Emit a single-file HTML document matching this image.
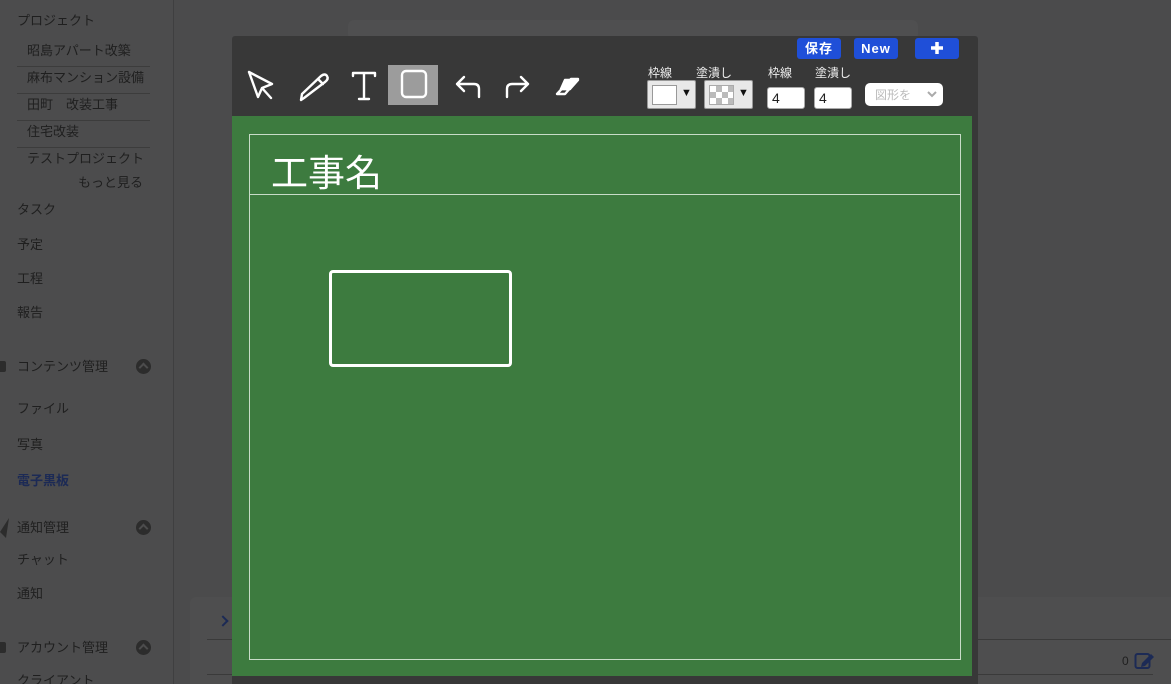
<!DOCTYPE html>
<html><head><meta charset="utf-8"><style>
*{margin:0;padding:0;box-sizing:border-box}
html,body{width:1171px;height:684px;overflow:hidden}
body{background:#4b4b4c;font-family:"Liberation Sans","Noto Sans CJK JP",sans-serif;position:relative;color:#222}
.side{position:absolute;left:0;top:0;width:174px;height:684px;background:#4c4c4d;border-right:1px solid #3f3f40}
.t{position:absolute;font-size:13px;color:#1f1f1f;white-space:nowrap}
.sub{position:absolute;left:17px;width:133px;border-bottom:1px solid #3c3c3c;height:27px}
.chev{position:absolute;left:136px;width:15px;height:15px;border-radius:50%;background:#2c2c2c}
.chev:after{content:"";position:absolute;left:4px;top:5px;width:5px;height:5px;border-left:2px solid #4c4c4d;border-top:2px solid #4c4c4d;transform:rotate(45deg)}
.modal{position:absolute;left:232px;top:36px;width:746px;height:648px;background:#383838;border-radius:3px 3px 0 0}
.btn{position:absolute;top:2px;height:21px;background:#1f4fd8;color:#fff;font-weight:bold;font-size:13px;border-radius:3px;text-align:center;line-height:21px;letter-spacing:1px}
.lbl{position:absolute;top:28px;font-size:12px;color:#eee}
.sel{position:absolute;top:44px;width:49px;height:29px;background:#e8e8e8;border:1px solid #999;border-radius:2px}
.inp{position:absolute;top:51px;width:38px;height:22px;background:#fff;border:1px solid #aaa;border-radius:3px;font-size:14px;padding-left:4px;line-height:20px;color:#222}
.green{position:absolute;left:0;top:80px;width:740px;height:560px;background:#3d7b3f}
</style></head><body>
<div class="side">
<div class="t" style="left:17px;top:10px">プロジェクト</div>
<div class="sub" style="top:40px"><div class="t" style="left:10px;top:0px">昭島アパート改築</div></div>
<div class="sub" style="top:67px"><div class="t" style="left:10px;top:0px">麻布マンション設備</div></div>
<div class="sub" style="top:94px"><div class="t" style="left:10px;top:0px">田町　改装工事</div></div>
<div class="sub" style="top:121px"><div class="t" style="left:10px;top:0px">住宅改装</div></div>
<div class="t" style="left:27px;top:148px">テストプロジェクト</div>
<div class="t" style="left:78px;top:172px">もっと見る</div>
<div class="t" style="left:17px;top:199px">タスク</div>
<div class="t" style="left:17px;top:234px">予定</div>
<div class="t" style="left:17px;top:268px">工程</div>
<div class="t" style="left:17px;top:302px">報告</div>
<div style="position:absolute;left:-4px;top:361px;width:10px;height:11px;background:#2c2c2c;border-radius:2px"></div>
<div class="t" style="left:17px;top:356px">コンテンツ管理</div><div class="chev" style="top:359px"></div>
<div class="t" style="left:17px;top:398px">ファイル</div>
<div class="t" style="left:17px;top:434px">写真</div>
<div class="t" style="left:17px;top:470px;color:#1c2a55;font-weight:bold">電子黒板</div>
<svg style="position:absolute;left:0;top:518px" width="10" height="20"><path d="M0 14 L9 0 L6 20 Z" fill="#2c2c2c"/></svg>
<div class="t" style="left:17px;top:517px">通知管理</div><div class="chev" style="top:520px"></div>
<div class="t" style="left:17px;top:549px">チャット</div>
<div class="t" style="left:17px;top:583px">通知</div>
<div style="position:absolute;left:-4px;top:642px;width:10px;height:11px;background:#2c2c2c;border-radius:2px"></div>
<div class="t" style="left:17px;top:637px">アカウント管理</div><div class="chev" style="top:640px"></div>
<div class="t" style="left:17px;top:670px">クライアント</div>
</div>
<div style="position:absolute;left:348px;top:20px;width:570px;height:20px;background:#4f4f50;border-radius:6px"></div>
<div style="position:absolute;left:190px;top:597px;width:981px;height:87px;background:#4e4e4f;border-radius:6px 0 0 0"></div>
<div style="position:absolute;left:207px;top:639px;width:964px;border-top:1px solid #3a3a3a"></div>
<div style="position:absolute;left:207px;top:674px;width:946px;border-top:1px solid #3a3a3a"></div>
<div style="position:absolute;left:219px;top:617px;width:8px;height:8px;border-right:2px solid #1c2a55;border-top:2px solid #1c2a55;transform:rotate(45deg)"></div>
<div class="t" style="left:1122px;top:654px;font-size:12px">0</div>
<svg style="position:absolute;left:1134px;top:651px" width="22" height="20" viewBox="0 0 22 20"><rect x="1.5" y="3" width="14" height="14" rx="2" fill="none" stroke="#1c2a55" stroke-width="2"/><path d="M8 12 L17 3 L20 6 L11 15 L7 16Z" fill="#1c2a55"/></svg>
<div class="modal">
<div class="btn" style="left:565px;width:44px">保存</div>
<div class="btn" style="left:622px;width:44px">New</div>
<div class="btn" style="left:683px;width:44px"><svg width="14" height="14" style="margin-top:3px" viewBox="0 0 14 14"><path d="M7 1V13M1 7H13" stroke="#fff" stroke-width="3.5"/></svg></div>
<div style="position:absolute;left:156px;top:29px;width:50px;height:40px;background:#9c9c9c"></div>
<svg style="position:absolute;left:0;top:0" width="400" height="80" fill="none" stroke="#fff" stroke-width="2.4" stroke-linecap="round" stroke-linejoin="round">
<path d="M17 36 L40 48 L30 52 L39 62 M17 36 L26 61 L30 52"/>
<path d="M72 62 L69 64 L70 58 L89 40 Q93 37 95 40 Q97 43 93 46 Z M86 43 L91 48"/>
<path d="M121 40 V37 H143 V40 M132 37 V63 M127 63 H137"/>
<rect x="170" y="35" width="24" height="26" rx="4"/>
<path d="M247 61 V53 Q247 48 242 48 H225 M232 41 L225 48 L232 55"/>
<path d="M275 61 V53 Q275 48 280 48 H296 M289 41 L296 48 L289 55"/>
<path d="M325 58 L339 43 H346 L333 58 Z M329 53 H338"/>
<path d="M333 44 L346 44 L338 53 L329 53 Z" fill="#fff"/>
</svg>
<div class="lbl" style="left:416px">枠線</div><div class="lbl" style="left:464px">塗潰し</div>
<div class="lbl" style="left:536px">枠線</div><div class="lbl" style="left:583px">塗潰し</div>
<div class="sel" style="left:415px"><div style="position:absolute;left:4px;top:4px;width:25px;height:20px;background:#fff;border:1px solid #999"></div><div style="position:absolute;left:33px;top:6px;font-size:11px;color:#111">▼</div></div>
<div class="sel" style="left:472px"><div style="position:absolute;left:4px;top:4px;width:25px;height:20px;background:repeating-conic-gradient(#bbb 0 25%,#fff 0 50%) 0 0/12px 12px;border:1px solid #aaa"></div><div style="position:absolute;left:33px;top:6px;font-size:11px;color:#111">▼</div></div>
<div class="inp" style="left:535px">4</div>
<div class="inp" style="left:582px">4</div>
<div style="position:absolute;left:633px;top:47px;width:78px;height:23px;background:#fff;border-radius:5px;font-size:12px;color:#bbb;padding:3px 0 0 10px">図形を<svg style="position:absolute;right:6px;top:8px" width="10" height="7"><path d="M1 1 L5 5 L9 1" stroke="#aaa" stroke-width="2" fill="none"/></svg></div>
<div class="green">
<div style="position:absolute;left:17px;top:18px;width:712px;height:526px;border:1px solid #c8dcc8"></div>
<div style="position:absolute;left:17px;top:78px;width:712px;border-top:1px solid #c8dcc8"></div>
<div style="position:absolute;left:39px;top:27px;font-size:37px;color:#fff;font-family:'Noto Sans CJK JP',sans-serif;font-weight:400">工事名</div>
<div style="position:absolute;left:97px;top:154px;width:183px;height:97px;border:3px solid #fff;border-radius:4px"></div>
</div>
</div>
</body></html>
